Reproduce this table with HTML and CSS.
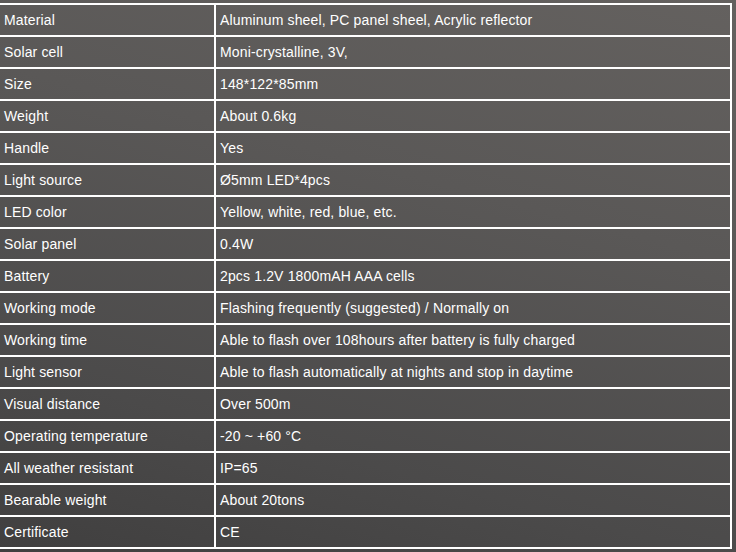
FILE: index.html
```html
<!DOCTYPE html>
<html>
<head>
<meta charset="utf-8">
<link rel="stylesheet" href="styles.css">
</head>
<body>
<table class="spec">
<tbody>
<tr><td class="label">Material</td><td class="value">Aluminum sheel, PC panel sheel, Acrylic reflector</td></tr>
<tr><td class="label">Solar cell</td><td class="value">Moni-crystalline, 3V,</td></tr>
<tr><td class="label">Size</td><td class="value">148*122*85mm</td></tr>
<tr><td class="label">Weight</td><td class="value">About 0.6kg</td></tr>
<tr><td class="label">Handle</td><td class="value">Yes</td></tr>
<tr><td class="label">Light source</td><td class="value">Ø5mm LED*4pcs</td></tr>
<tr><td class="label">LED color</td><td class="value">Yellow, white, red, blue, etc.</td></tr>
<tr><td class="label">Solar panel</td><td class="value">0.4W</td></tr>
<tr><td class="label">Battery</td><td class="value">2pcs 1.2V 1800mAH AAA cells</td></tr>
<tr><td class="label">Working mode</td><td class="value">Flashing frequently (suggested) / Normally on</td></tr>
<tr><td class="label">Working time</td><td class="value">Able to flash over 108hours after battery is fully charged</td></tr>
<tr><td class="label">Light sensor</td><td class="value">Able to flash automatically at nights and stop in daytime</td></tr>
<tr><td class="label">Visual distance</td><td class="value">Over 500m</td></tr>
<tr><td class="label">Operating temperature</td><td class="value">-20 ~ +60 °C</td></tr>
<tr><td class="label">All weather resistant</td><td class="value">IP=65</td></tr>
<tr><td class="label">Bearable weight</td><td class="value">About 20tons</td></tr>
<tr><td class="label">Certificate</td><td class="value">CE</td></tr>
</tbody>
</table>
</body>
</html>
```
FILE: styles.css
```css
html {
  height: 100%;
  background: linear-gradient(195deg, #64615f 0%, #5a5857 35%, #4b4a4a 75%, #403f3f 100%);
}
body {
  margin: 0;
  min-height: 100%;
  font-family: "Liberation Sans", Arial, sans-serif;
  font-size: 14px;
  letter-spacing: 0.15px;
  color: #ffffff;
}
.spec {
  margin-top: 3px;
  width: 732px;
  border-collapse: separate;
  border-spacing: 0;
  border-top: 2px solid #ffffff;
  table-layout: fixed;
}
.spec td {
  box-sizing: border-box;
  height: 32px;
  padding: 0 0 0 4px;
  border-right: 2px solid #ffffff;
  border-bottom: 2px solid #ffffff;
  vertical-align: middle;
  white-space: nowrap;
  line-height: 16px;
}
.spec .label {
  width: 216px;
}
.spec .value {
  width: 516px;
}
```
